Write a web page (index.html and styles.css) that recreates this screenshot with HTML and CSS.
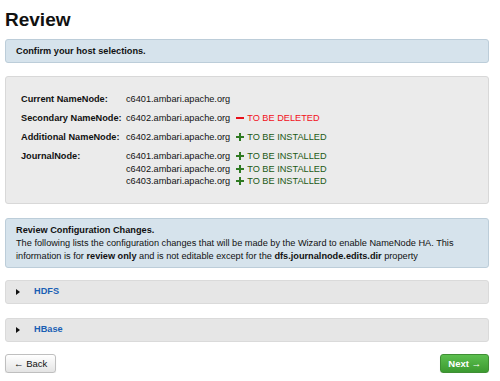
FILE: index.html
```html
<!DOCTYPE html>
<html lang="en">
<head>
    <meta charset="UTF-8">
    <title>Review</title>
    <link rel="stylesheet" href="styles.css">
</head>
<body>

<div class="container">
    <h1>Review</h1>

    <div class="alert">Confirm your host selections.</div>

    <div class="well">
        <div class="row">
            <div class="label">Current NameNode:</div>
            <div class="hosts">
                <div class="host-line"><span class="host">c6401.ambari.apache.org</span></div>
            </div>
        </div>
        <div class="row">
            <div class="label">Secondary NameNode:</div>
            <div class="hosts">
                <div class="host-line">
                    <span class="host">c6402.ambari.apache.org</span>
                    <span class="status deleted">
                        <svg width="8" height="8" viewBox="0 0 8 8"><rect x="0" y="3" width="8" height="2" fill="#e8101a"/></svg>
                        TO BE DELETED
                    </span>
                </div>
            </div>
        </div>
        <div class="row">
            <div class="label">Additional NameNode:</div>
            <div class="hosts">
                <div class="host-line">
                    <span class="host">c6402.ambari.apache.org</span>
                    <span class="status installed">
                        <svg width="8" height="8" viewBox="0 0 8 8"><rect x="0" y="3" width="8" height="2" fill="#2f7a22"/><rect x="3" y="0" width="2" height="8" fill="#2f7a22"/></svg>
                        TO BE INSTALLED
                    </span>
                </div>
            </div>
        </div>
        <div class="row">
            <div class="label">JournalNode:</div>
            <div class="hosts">
                <div class="host-line">
                    <span class="host">c6401.ambari.apache.org</span>
                    <span class="status installed">
                        <svg width="8" height="8" viewBox="0 0 8 8"><rect x="0" y="3" width="8" height="2" fill="#2f7a22"/><rect x="3" y="0" width="2" height="8" fill="#2f7a22"/></svg>
                        TO BE INSTALLED
                    </span>
                </div>
                <div class="host-line">
                    <span class="host">c6402.ambari.apache.org</span>
                    <span class="status installed">
                        <svg width="8" height="8" viewBox="0 0 8 8"><rect x="0" y="3" width="8" height="2" fill="#2f7a22"/><rect x="3" y="0" width="2" height="8" fill="#2f7a22"/></svg>
                        TO BE INSTALLED
                    </span>
                </div>
                <div class="host-line">
                    <span class="host">c6403.ambari.apache.org</span>
                    <span class="status installed">
                        <svg width="8" height="8" viewBox="0 0 8 8"><rect x="0" y="3" width="8" height="2" fill="#2f7a22"/><rect x="3" y="0" width="2" height="8" fill="#2f7a22"/></svg>
                        TO BE INSTALLED
                    </span>
                </div>
            </div>
        </div>
    </div>

    <div class="alert config">
        <div class="line"><b>Review Configuration Changes.</b></div>
        <div class="line">The following lists the configuration changes that will be made by the Wizard to enable NameNode HA. This</div>
        <div class="line"><span>information is for </span><b>review only</b><span> and is not editable except for the </span><b>dfs.journalnode.edits.dir</b><span> property</span></div>
    </div>

    <div class="panel">
        <span class="caret"></span>
        <a class="panel-title">HDFS</a>
    </div>

    <div class="panel">
        <span class="caret"></span>
        <a class="panel-title">HBase</a>
    </div>

    <div class="actions">
        <button class="btn">&larr; Back</button>
        <button class="btn btn-success">Next &rarr;</button>
    </div>
</div>

</body>
</html>
```

FILE: styles.css
```css
body {
    font-family: "Liberation Sans", Arial, sans-serif;
    font-size: 9.2px;
    line-height: 12.5px;
    color: #111;
    margin: 0;
    background: #fff;
}
.container {
    width: 484px;
    padding-left: 5px;
}
h1 {
    font-size: 19px;
    line-height: 24px;
    margin: 8px 0 7px 0;
    color: #111;
}
.alert {
    background: #d6e3ec;
    border: 1px solid #bccdd9;
    border-radius: 3px;
    padding: 5px 10px 4px;
    font-weight: bold;
    line-height: 13px;
}
.alert.config {
    font-weight: normal;
    margin-top: 14px;
    padding: 5px 10px 4px;
}
.line {
    white-space: nowrap;
}
.well {
    margin-top: 13px;
    background: #ebebeb;
    border: 1px solid #d8d8d8;
    border-radius: 3px;
    padding: 16px 15px 15px;
}
.row {
    display: flex;
    margin-bottom: 6.5px;
}
.row:last-child {
    margin-bottom: 0;
}
.label {
    width: 105px;
    font-weight: bold;
}
.host-line {
    display: flex;
    align-items: center;
}
.status {
    margin-left: 6px;
    display: flex;
    align-items: center;
    gap: 3px;
}
.deleted {
    color: #f2101a;
}
.installed {
    color: #1b5a14;
}
.panel {
    margin-top: 12px;
    height: 22px;
    background: #e6e6e6;
    border: 1px solid #dadada;
    border-radius: 3px;
    display: flex;
    align-items: center;
}
.panel + .panel {
    margin-top: 14px;
}
.caret {
    width: 0;
    height: 0;
    border-top: 3px solid transparent;
    border-bottom: 3px solid transparent;
    border-left: 4px solid #111;
    margin-left: 10px;
}
.panel-title {
    margin-left: 14px;
    color: #1a5fb4;
    font-weight: bold;
}
.actions {
    margin-top: 12px;
    display: flex;
    justify-content: space-between;
}
.btn {
    font-family: "Liberation Sans", Arial, sans-serif;
    font-size: 9.5px;
    height: 19px;
    padding: 0 8px;
    border: 1px solid #bfbfbf;
    border-radius: 3px;
    background: linear-gradient(#ffffff, #e4e4e4);
    color: #111;
    box-shadow: 0 1px 1px rgba(0,0,0,0.1);
}
.btn-success {
    padding: 0 7px;
    border-color: #3f8f34;
    background: linear-gradient(#5cbf4f, #3c9a30);
    color: #fff;
    font-weight: bold;
}
```
